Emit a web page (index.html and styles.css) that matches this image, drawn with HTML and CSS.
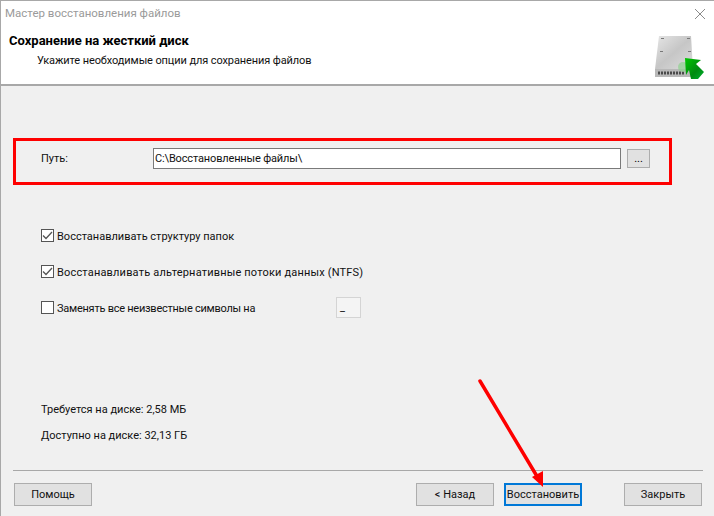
FILE: index.html
```html
<!DOCTYPE html>
<html lang="ru">
<head>
<meta charset="utf-8">
<title>Мастер восстановления файлов</title>
<link rel="stylesheet" href="styles.css">
</head>
<body>
<div class="window">
  <div class="titlebar">
    <span class="title">Мастер восстановления файлов</span>
    <svg class="close" width="10" height="10" viewBox="0 0 10 10"><path d="M0 0L10 10M10 0L0 10" stroke="#8a8a8a" stroke-width="1" fill="none"/></svg>
  </div>
  <header class="head">
    <div class="head-text">
      <div class="head-title">Сохранение на жесткий диск</div>
      <div class="head-sub">Укажите необходимые опции для сохранения файлов</div>
    </div>
    <svg class="disk" width="50" height="46" viewBox="0 0 50 46">
      <defs>
        <linearGradient id="dg" x1="0" y1="0" x2="1" y2="1"><stop offset="0" stop-color="#e6e6e6"/><stop offset=".5" stop-color="#c6c6c6"/><stop offset="1" stop-color="#dcdcdc"/></linearGradient>
        <linearGradient id="ag" x1="0" y1="0" x2="1" y2="1"><stop offset="0" stop-color="#00c800"/><stop offset=".6" stop-color="#008a10"/><stop offset="1" stop-color="#00b030"/></linearGradient>
      </defs>
      <path d="M5 1H37L39 34H1Z" fill="url(#dg)"/>
      <path d="M1 34H39V42H1Z" fill="#b8b8b8"/>
      <path d="M4 38H30" stroke="#4a4a4a" stroke-width="3" stroke-dasharray="2 1" fill="none"/>
      <path d="M7 3.500h3M33 3.500h3M6 16.500h3M34 16.500h3" stroke="#777" stroke-width="1" fill="none"/>
      <circle cx="29" cy="32" r="5" fill="#8fd08f" opacity=".7"/>
      <path d="M31 23L47 25L42 29L50 37L44 44L37 44L35 35L32 40Z" fill="url(#ag)"/>
    </svg>
  </header>
  <main class="content">
    <div class="path-row">
      <span class="path-label">Путь:</span>
      <div class="path-input">C:\Восстановленные файлы\</div>
      <button class="browse">...</button>
    </div>
    <div class="options">
      <label class="opt"><span class="box"><svg width="11" height="11" viewBox="0 0 11 11"><path d="M1 5.500L4 8.500L10 2" stroke="#555" stroke-width="1.300" fill="none"/></svg></span>Восстанавливать структуру папок</label>
      <label class="opt opt-wide"><span class="box"><svg width="11" height="11" viewBox="0 0 11 11"><path d="M1 5.500L4 8.500L10 2" stroke="#555" stroke-width="1.300" fill="none"/></svg></span>Восстанавливать альтернативные потоки данных (NTFS)</label>
      <label class="opt"><span class="box"></span><span class="opt-text">Заменять все неизвестные символы на</span><span class="char">_</span></label>
    </div>
    <div class="info">
      <div>Требуется на диске: 2,58 МБ</div>
      <div>Доступно на диске: 32,13 ГБ</div>
    </div>
  </main>
  <footer class="foot">
    <button class="btn">Помощь</button>
    <div class="foot-right">
      <button class="btn">&lt; Назад</button>
      <button class="btn primary">Восстановить</button>
      <button class="btn close-btn">Закрыть</button>
    </div>
  </footer>
  <div class="redbox"></div>
  <svg class="arrow" width="714" height="516" viewBox="0 0 714 516">
    <path d="M480 381L538 478" stroke="#fe0000" stroke-width="3.500" stroke-linecap="round" fill="none"/>
    <path d="M543 487L532 477L543 471Z" fill="#fe0000"/>
  </svg>
</div>
</body>
</html>
```
FILE: styles.css
```css
* { box-sizing: border-box; }
html, body { margin: 0; padding: 0; }
body { width: 714px; height: 516px; overflow: hidden; font-family: Roboto, Tahoma, sans-serif; font-size: 11px; color: #111; }
.window { position: relative; width: 714px; height: 516px; background: #f0f0f0; border-top: 1px solid #a8a8a8; border-left: 1px solid #a8a8a8; display: flex; flex-direction: column; }
.titlebar { height: 26px; background: #fff; display: flex; align-items: center; justify-content: space-between; padding: 0 9px 0 4px; }
.title { font-size: 11.5px; color: #9a9a9a; margin-bottom: 2px; }
.close { margin-bottom: 1px; }
.head { height: 59px; background: #fff; border-bottom: 2px solid #a8a8a8; display: flex; justify-content: space-between; padding: 0 10px 0 8px; }
.head-title { font-weight: 700; font-size: 13px; line-height: 16px; margin-top: 6px; color: #000; }
.head-sub { margin: 4px 0 0 28px; line-height: 16px; letter-spacing: -.1px; }
.disk { margin-top: 8px; }
.content { flex: 1; display: flex; flex-direction: column; padding-left: 40px; }
.path-row { display: flex; align-items: center; margin-top: 62px; height: 21px; }
.path-label { width: 112px; }
.path-input { width: 468px; height: 21px; background: #fff; border: 1px solid #7a7a7a; padding: 0 1px; line-height: 19px; letter-spacing: -.15px; }
.browse { width: 23px; height: 19px; margin-left: 6px; background: #e1e1e1; border: 1px solid #adadad; padding: 0; font: inherit; line-height: 17px; }
.options { margin-top: 57px; display: flex; flex-direction: column; gap: 15px; }
.opt { display: flex; align-items: center; height: 21px; }
.opt-wide { letter-spacing: .18px; }
.box { width: 13px; height: 13px; border: 1px solid #555; background: #fff; margin: -2px 3px 0 0; display: flex; align-items: center; justify-content: center; flex: none; }
.opt-text { width: 279px; letter-spacing: -.25px; }
.char { width: 25px; height: 21px; border: 1px solid #d4d4d4; background: #f4f4f4; margin-top: -2px; padding-left: 3px; line-height: 19px; }
.info { margin-top: 83px; display: flex; flex-direction: column; gap: 10px; line-height: 16px; }
.foot { height: 46px; margin: 0 11px 0 12px; border-top: 1px solid #a8a8a8; display: flex; justify-content: space-between; padding: 12px 1px 0 1px; }
.foot-right { display: flex; }
.btn { width: 78px; height: 23px; background: #e1e1e1; border: 1px solid #adadad; padding: 0; font: inherit; color: #111; }
.primary { margin-left: 10px; border: 2px solid #0078d7; background: #e1e1e1; }
.close-btn { margin-left: 42px; }
.redbox { position: absolute; left: 12px; top: 137px; width: 659px; height: 47px; border: 3px solid #fe0000; }
.arrow { position: absolute; left: -1px; top: -1px; pointer-events: none; }
```
